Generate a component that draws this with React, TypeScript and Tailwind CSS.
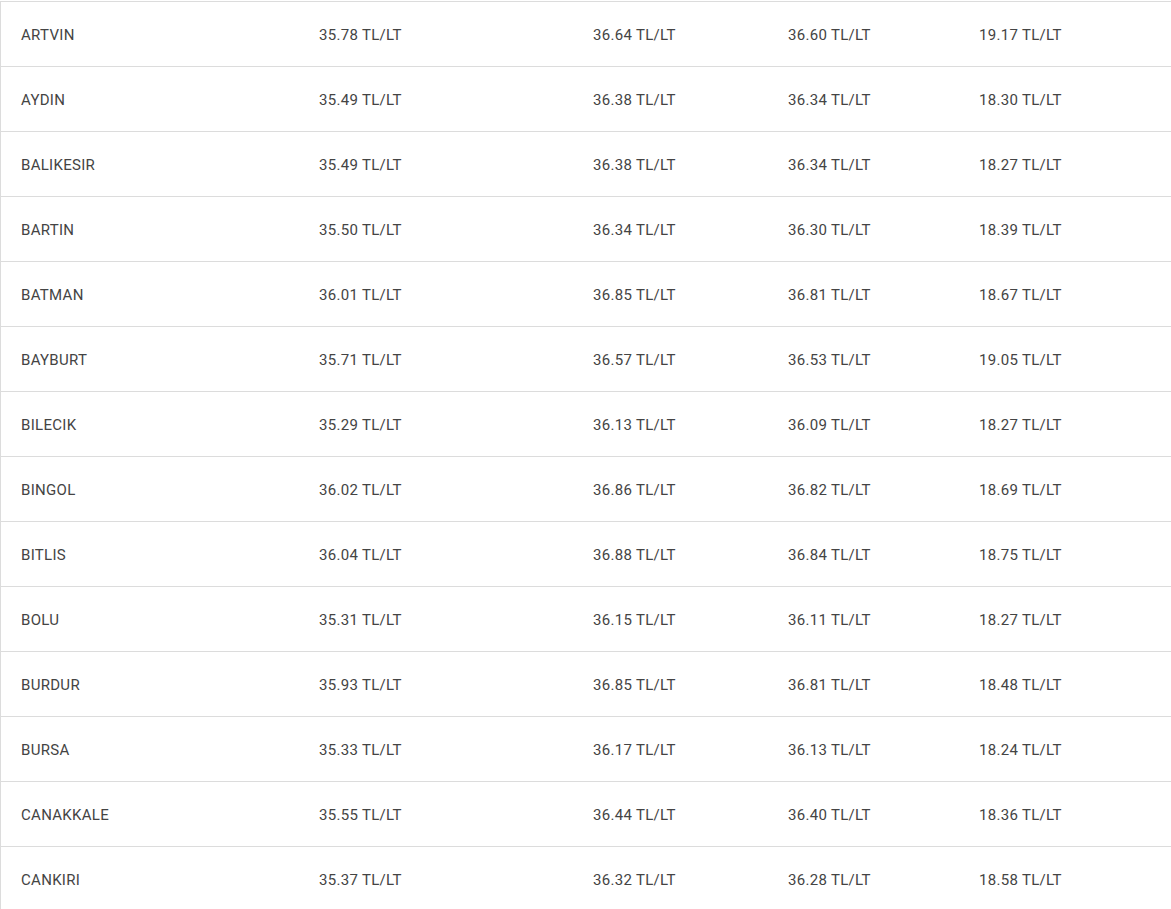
import React from "react";

const rows: [string, string, string, string, string][] = [
  ["ARTVIN", "35.78", "36.64", "36.60", "19.17"],
  ["AYDIN", "35.49", "36.38", "36.34", "18.30"],
  ["BALIKESIR", "35.49", "36.38", "36.34", "18.27"],
  ["BARTIN", "35.50", "36.34", "36.30", "18.39"],
  ["BATMAN", "36.01", "36.85", "36.81", "18.67"],
  ["BAYBURT", "35.71", "36.57", "36.53", "19.05"],
  ["BILECIK", "35.29", "36.13", "36.09", "18.27"],
  ["BINGOL", "36.02", "36.86", "36.82", "18.69"],
  ["BITLIS", "36.04", "36.88", "36.84", "18.75"],
  ["BOLU", "35.31", "36.15", "36.11", "18.27"],
  ["BURDUR", "35.93", "36.85", "36.81", "18.48"],
  ["BURSA", "35.33", "36.17", "36.13", "18.24"],
  ["CANAKKALE", "35.55", "36.44", "36.40", "18.36"],
  ["CANKIRI", "35.37", "36.32", "36.28", "18.58"],
];

export default function App() {
  return (
    <div
      className="w-[1171px] h-[909px] overflow-hidden bg-white pt-px text-[15px] text-[#444] tracking-[0.3px]"
      style={{ fontFamily: "Roboto, 'Liberation Sans', sans-serif" }}
    >
      <div className="border-l border-[#dcdcdc]">
        {rows.map((r) => (
          <div
            key={r[0]}
            className="grid grid-cols-[298px_274px_195px_191px_1fr] h-[65px] items-center pt-[2px] border-t border-[#dcdcdc]"
          >
            <div className="px-5">{r[0]}</div>
            <div className="px-5">{r[1]} TL/LT</div>
            <div className="px-5">{r[2]} TL/LT</div>
            <div className="px-5">{r[3]} TL/LT</div>
            <div className="px-5">{r[4]} TL/LT</div>
          </div>
        ))}
      </div>
    </div>
  );
}
